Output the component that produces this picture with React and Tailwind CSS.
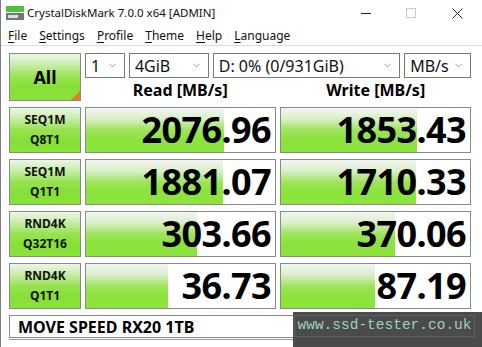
import { ChevronDown } from "lucide-react";

const rows = [
	{ l1: "SEQ1M", l2: "Q8T1", read: "2076.96", rw: 138, write: "1853.43", ww: 136 },
	{ l1: "SEQ1M", l2: "Q1T1", read: "1881.07", rw: 137, write: "1710.33", ww: 135 },
	{ l1: "RND4K", l2: "Q32T16", read: "303.66", rw: 111, write: "370.06", ww: 114 },
	{ l1: "RND4K", l2: "Q1T1", read: "36.73", rw: 82, write: "87.19", ww: 94 },
];

const greenBtn =
	"bg-[linear-gradient(to_bottom,#eef6e8_0%,#c5eca4_25%,#96e350_50%,#86df34_75%,#8ae43a_100%)]";
const greenBar =
	"bg-[linear-gradient(to_bottom,#f3f6f1_0%,#d9efc8_25%,#9fe35c_50%,#8be43c_70%,#8de33f_100%)]";

const Select = ({ w, text }) => (
	<div
		className={`${w} h-[25px] border border-[#7a7a7a] bg-white flex items-center justify-between pl-[5px] pr-[6px] text-[16px] text-[#111]`}
	>
		<span className="leading-[20px]">{text}</span>
		<ChevronDown size={11} strokeWidth={1.3} className="text-[#555]" />
	</div>
);

const Value = ({ text, bar }) => (
	<div className="relative h-[46px] border border-[#8a8a8a] bg-white">
		<div className={`absolute left-0 top-0 bottom-0 ${greenBar}`} style={{ width: bar }} />
		<div className="relative h-full flex items-center justify-end pr-[4px] text-[36px] font-bold tracking-[-0.6px] text-black leading-[42px]">
			{text}
		</div>
	</div>
);

const Menu = ({ k, rest }) => (
	<span>
		<span className="underline underline-offset-2">{k}</span>
		{rest}
	</span>
);

export default function App() {
	return (
		<div className="relative w-[482px] h-[347px] overflow-hidden bg-white font-['Noto_Sans',sans-serif] text-black border-l border-[#7d7d7d]">
			<div className="h-[26px] flex items-center">
				<svg width="20" height="16" viewBox="0 0 20 16" className="ml-[4px] mr-[2px]">
					<rect x="1" y="1" width="18" height="6" fill="#4cc23a" />
					<rect x="1" y="8" width="18" height="7" fill="#6d7a73" />
					<rect x="3" y="10" width="10" height="3" fill="#d8e0db" />
				</svg>
				<span className="text-[11.5px] text-[#111]">CrystalDiskMark 7.0.0 x64 [ADMIN]</span>
				<div className="ml-auto flex items-center">
					<span className="w-[10px] h-px bg-[#222] mr-[35px]" />
					<span className="w-[10px] h-[10px] border border-[#c9c9c9] mr-[36px]" />
					<svg width="11" height="11" viewBox="0 0 11 11" className="mr-[19px]">
						<path d="M0.5 0.5 L10.5 10.5 M10.5 0.5 L0.5 10.5" stroke="#222" strokeWidth="1" />
					</svg>
				</div>
			</div>
			<div className="h-[20px] flex items-center gap-[12px] pl-[7px] text-[12px] text-[#111] border-b border-[#dcdcdc]">
				<Menu k="F" rest="ile" />
				<Menu k="S" rest="ettings" />
				<Menu k="P" rest="rofile" />
				<Menu k="T" rest="heme" />
				<Menu k="H" rest="elp" />
				<Menu k="L" rest="anguage" />
			</div>

			<div className="pl-[8px] pt-[7px]">
				<div className="grid grid-cols-[72px_191px_191px] gap-x-[4px] gap-y-[6px]">
					<div
						className={`relative h-[48px] border border-[#8a8a8a] ${greenBtn} flex items-center justify-center text-[18px] font-bold`}
					>
						All
						<div className="absolute right-0 bottom-0 w-0 h-0 border-l-[9px] border-l-transparent border-b-[9px] border-b-[#e8782a]" />
					</div>
					<div className="col-span-2 flex flex-col">
						<div className="flex gap-[4px]">
							<Select w="w-[40px]" text="1" />
							<Select w="w-[80px]" text="4GiB" />
							<Select w="w-[188px]" text="D: 0% (0/931GiB)" />
							<Select w="w-[67px]" text="MB/s" />
						</div>
						<div className="flex flex-1 items-center text-[16px] font-bold leading-none pt-[1px]">
							<div className="w-[191px] text-center">Read [MB/s]</div>
							<div className="w-[191px] ml-[5px] text-center">Write [MB/s]</div>
						</div>
					</div>
					{rows.map((r) => (
						<div key={r.l1 + r.l2} className="contents">
							<div
								className={`h-[46px] border border-[#8a8a8a] ${greenBtn} flex flex-col items-center justify-center text-[12px] font-bold leading-[20px] text-[#111]`}
							>
								<span>{r.l1}</span>
								<span>{r.l2}</span>
							</div>
							<Value text={r.read} bar={r.rw} />
							<Value text={r.write} bar={r.ww} />
						</div>
					))}
				</div>
				<div className="mt-[6px] w-[465px] h-[23px] border border-[#8a8a8a] bg-white flex items-center pl-[8px] text-[16px] font-bold leading-none">
					MOVE SPEED RX20 1TB
				</div>
				<div className="mt-[1px] h-px w-full bg-[#9a9a9a]" />
			</div>

			<div className="absolute left-[292px] top-[312px] w-[190px] h-[35px] bg-[#4b4b4b]">
				<div className="ml-[1px] mt-[3px] w-[181px] h-[22px] border border-[#5f5f5f] flex items-center justify-center font-['Liberation_Mono',monospace] text-[14.5px] text-[#9fd0bd]">
					www.ssd-tester.co.uk
				</div>
			</div>
		</div>
	);
}
